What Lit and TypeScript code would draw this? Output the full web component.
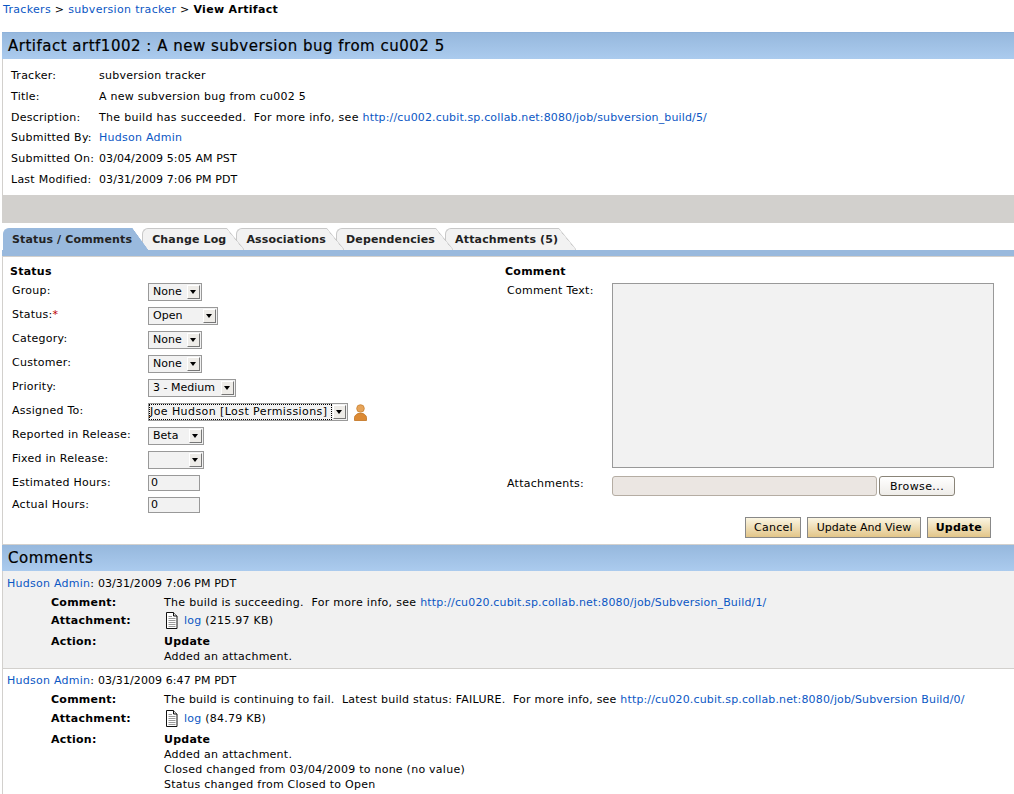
import { LitElement, css, html } from 'lit';
import { customElement } from 'lit/decorators.js';

const FIELDS = [
  { label: 'Tracker:', value: html`subversion tracker` },
  { label: 'Title:', value: html`A new subversion bug from cu002 5` },
  {
    label: 'Description:',
    value: html`<span class="wide">The build has succeeded.&nbsp; For more info, see </span><a class="url">http://cu002.cubit.sp.collab.net:8080/job/subversion_build/5/</a>`,
  },
  { label: 'Submitted By:', value: html`<a>Hudson Admin</a>` },
  { label: 'Submitted On:', value: html`<span class="date">03/04/2009 5:05 AM PST</span>` },
  { label: 'Last Modified:', value: html`<span class="date">03/31/2009 7:06 PM PDT</span>` },
];

const TABS = ['Status / Comments', 'Change Log', 'Associations', 'Dependencies', 'Attachments (5)'];

const SELECTS = [
  { label: 'Group:', value: 'None', width: 54 },
  { label: 'Status:', value: 'Open', width: 70, required: true },
  { label: 'Category:', value: 'None', width: 54 },
  { label: 'Customer:', value: 'None', width: 54 },
  { label: 'Priority:', value: '3 - Medium', width: 88 },
  { label: 'Assigned To:', value: 'Joe Hudson [Lost Permissions]', width: 200, focused: true },
  { label: 'Reported in Release:', value: 'Beta', width: 56 },
  { label: 'Fixed in Release:', value: '', width: 56 },
];

const personIcon = html`<svg class="person" width="13" height="17" viewBox="0 0 13 17">
  <circle cx="6.500" cy="4.500" r="3.800" fill="#e6a45a" stroke="#c9802f" stroke-width=".8" />
  <path d="M.5 16.500v-3c0-1.600 1.600-3 3.500-4h5c1.900 1 3.500 2.400 3.500 4v3z" fill="#dc8a34" stroke="#c0721f" stroke-width=".8" />
</svg>`;

const docIcon = html`<svg class="doc" width="13" height="17" viewBox="0 0 13 17" fill="none" stroke="#111">
  <path d="M1.500.5h7l3.500 3.500v12.500h-10.500z" fill="#fff" />
  <path d="M8.500.5v3.500h3.500" fill="#ddd" />
  <path d="M3.500 4.500h3.500M3.500 6.500h7M3.500 8.500h7M3.500 10.500h7M3.500 12.500h7M3.500 14.500h7" stroke="#999" />
</svg>`;

@customElement('app-root')
export class AppRoot extends LitElement {
  static styles = css`
    :host {
      display: block;
      height: 794px;
      overflow: hidden;
      background: #fff;
      color: #000;
      font: 11px/14px 'DejaVu Sans', sans-serif;
      letter-spacing: 0.25px;
    }
    a {
      color: #0b57c4;
    }
    a.url {
      letter-spacing: 0.15px;
    }
    .date {
      letter-spacing: 0.08px;
    }
    .wide {
      letter-spacing: 0.3px;
    }
    .narrow {
      letter-spacing: 0.23px;
    }
    .crumbs {
      padding: 3px 3px 0;
      height: 32px;
      box-sizing: border-box;
      letter-spacing: 0.32px;
    }
    .crumbs b {
      font-weight: bold;
    }
    .bar {
      margin-left: 2px;
      background: linear-gradient(#96b8dd, #abcbee);
      font-size: 15px;
      letter-spacing: 0.5px;
      -webkit-text-stroke: 0.2px #000;
      line-height: 27px;
      height: 27px;
      padding-left: 6px;
      box-sizing: border-box;
      border-top: 1px solid #8fb2da;
    }
    .artifact {
      border-left: 1px solid #d2d0cd;
      margin-left: 2px;
      padding: 6.6px 0 6px 8px;
      height: 136px;
      box-sizing: border-box;
    }
    .artifact .row {
      display: grid;
      grid-template-columns: 88px 1fr;
      height: 20.8px;
      align-items: center;
    }
    .gray {
      margin-left: 2px;
      height: 28px;
      background: #d2d0cd;
    }
    .tabs {
      margin: 5px 0 0 3px;
      display: flex;
      height: 22px;
    }
    .tab {
      position: relative;
      font-weight: bold;
      letter-spacing: 0.15px;
      height: 22px;
      line-height: 21px;
      padding: 0 0 0 8px;
      background: #f2f2f2;
      border-top: 1px solid #c8c8c8;
      border-left: 1px solid #c8c8c8;
      border-radius: 6px 0 0 0;
      box-sizing: border-box;
      color: #222;
    }
    .tab::after {
      content: '';
      position: absolute;
      z-index: 1;
      top: -1px;
      right: -18px;
      width: 18px;
      height: 22px;
      background: linear-gradient(to top right, #f2f2f2 49%, #c8c8c8 50%, transparent 54%);
    }
    .tab.active {
      background: #99b9dd;
      border-color: #99b9dd;
      z-index: 2;
    }
    .tab.active::after {
      right: -16px;
      width: 16px;
      background: linear-gradient(to top right, #99b9dd 50%, transparent 52%);
    }
    .tab + .tab {
      margin-left: 10px;
      padding-left: 9px;
    }
    .strip {
      height: 6px;
      background: #99b9dd;
      margin-left: 2px;
    }
    .form {
      display: grid;
      grid-template-columns: 495px 1fr;
      margin-left: 2px;
      height: 288px;
      border-left: 1px solid #d2d0cd;
      border-top: 1px solid #d2d0cd;
      box-sizing: border-box;
    }
    .left {
      padding: 8px 0 0 7px;
    }
    h4 {
      margin: 0;
      font-size: 11px;
      line-height: 14px;
      font-weight: bold;
    }
    .field {
      display: grid;
      grid-template-columns: 136px 1fr;
      align-items: center;
      height: 24px;
      padding-left: 2px;
    }
    .field > span:first-child {
      padding-bottom: 2px;
    }
    .field.first {
      margin-top: 1px;
    }
    .field.input {
      height: 22px;
    }
    .field.input > span:first-child {
      padding-bottom: 0;
    }
    .req {
      color: #b00;
    }
    .select {
      display: inline-flex;
      align-items: center;
      justify-content: space-between;
      box-sizing: border-box;
      height: 18px;
      padding: 0 1px 0 4px;
      border: 1px solid #999;
      background: #f2f2f2;
      letter-spacing: 0;
      vertical-align: middle;
    }
    .select.focused {
      padding-left: 1px;
      letter-spacing: 0.42px;
    }
    .select.focused span:first-child {
      flex: 1;
      height: 14px;
      line-height: 14px;
      outline: 1px dotted #000;
      margin-right: 2px;
    }
    .arrow {
      position: relative;
      width: 13px;
      height: 14px;
      background: #eeece8;
      border-right: 1px solid #777;
      border-bottom: 1px solid #777;
      border-top: 1px solid #fff;
      border-left: 1px solid #fff;
      box-sizing: border-box;
      flex: none;
    }
    .arrow::after {
      content: '';
      position: absolute;
      left: 2px;
      top: 4px;
      border: 3.5px solid transparent;
      border-top: 4px solid #000;
      border-bottom: 0;
    }
    .person {
      margin-left: 6px;
      vertical-align: middle;
    }
    .text {
      display: block;
      width: 52px;
      height: 16px;
      box-sizing: border-box;
      border: 1px solid #999;
      background: #f2f2f2;
      padding-left: 2px;
      line-height: 14px;
    }
    .right {
      padding: 8px 0 0 7px;
    }
    .comment-row {
      display: grid;
      grid-template-columns: 105px 382px;
      padding-left: 2px;
      margin-top: 4px;
    }
    .comment-row.c-text {
      height: 185px;
    }
    .comment-row.c-text > span {
      padding-top: 1px;
    }
    .area {
      height: 185px;
      border: 1px solid #999;
      background: #f2f2f2;
      box-sizing: border-box;
    }
    .attach {
      margin-top: 8px;
      align-items: start;
    }
    .attach > span {
      padding-top: 1px;
    }
    .file {
      display: flex;
      gap: 2px;
    }
    .file i {
      display: block;
      width: 265px;
      height: 20px;
      box-sizing: border-box;
      border: 1px solid #b5ada3;
      border-radius: 3px;
      background: #ebe6e2;
    }
    .file span {
      width: 76px;
      height: 20px;
      box-sizing: border-box;
      border: 1px solid #8a8478;
      border-radius: 3px;
      background: linear-gradient(#fff, #eeece8);
      text-align: center;
      line-height: 19px;
      letter-spacing: 0.4px;
    }
    .actions {
      display: flex;
      justify-content: flex-end;
      gap: 6px;
      margin: 21px 23px 0 0;
    }
    .btn {
      height: 21px;
      box-sizing: border-box;
      border: 1px solid #888;
      background: linear-gradient(#fbf6e3, #e2c588);
      line-height: 19px;
      padding: 0 8px;
    }
    .btn.cancel {
      padding: 0 7.5px;
    }
    .btn.long {
      letter-spacing: 0;
      padding: 0 8.5px;
    }
    .comments-bar {
      border-top: 1px solid #d2d0cd;
      height: 27px;
      line-height: 26px;
    }
    .entry {
      margin-left: 2px;
      padding: 6px 0 0 4px;
      border-left: 1px solid #d2d0cd;
      box-sizing: border-box;
    }
    .entry.shade {
      background: #f1f1f1;
      height: 98px;
      border-bottom: 1px solid #d2d0cd;
    }
    .entry.plain {
      height: 125px;
      padding-top: 5px;
    }
    .detail {
      display: grid;
      grid-template-columns: 113px 1fr;
      margin: 5px 0 0 44px;
      row-gap: 4px;
    }
    .detail dt {
      font-weight: bold;
    }
    .detail dd {
      margin: 0;
    }
    .detail .gap {
      padding-bottom: 3px;
    }
    .plain .detail .gap {
      padding-top: 1px;
    }
    .detail .action {
      line-height: 15px;
      margin-top: -1px;
    }
    .doc {
      vertical-align: middle;
      margin: -3px 6px -2px 1px;
    }
  `;

  private select(s: { value: string; width: number; focused?: boolean }) {
    return html`<span class="select ${s.focused ? 'focused' : ''}" style="width:${s.width}px">
      <span>${s.value}</span><span class="arrow"></span>
    </span>`;
  }

  render() {
    return html`
      <div class="crumbs"><a>Trackers</a> &gt; <a>subversion tracker</a> &gt; <b>View Artifact</b></div>
      <div class="bar">Artifact artf1002 : A new subversion bug from cu002 5</div>
      <div class="artifact">
        ${FIELDS.map((f) => html`<div class="row"><span>${f.label}</span><span>${f.value}</span></div>`)}
      </div>
      <div class="gray"></div>
      <div class="tabs">
        ${TABS.map((t, i) => html`<div class="tab ${i === 0 ? 'active' : ''}">${t}</div>`)}
      </div>
      <div class="strip"></div>
      <div class="form">
        <div class="left">
          <h4>Status</h4>
          ${SELECTS.map(
            (s, i) => html`<div class="field ${i === 0 ? 'first' : ''}">
              <span>${s.label}${s.required ? html`<span class="req">*</span>` : ''}</span>
              <span>${this.select(s)}${s.focused ? personIcon : ''}</span>
            </div>`
          )}
          <div class="field input"><span>Estimated Hours:</span><span class="text">0</span></div>
          <div class="field input"><span>Actual Hours:</span><span class="text">0</span></div>
        </div>
        <div class="right">
          <h4>Comment</h4>
          <div class="comment-row c-text"><span>Comment Text:</span><div class="area"></div></div>
          <div class="comment-row attach">
            <span>Attachments:</span>
            <div class="file"><i></i><span>Browse...</span></div>
          </div>
          <div class="actions">
            <span class="btn cancel">Cancel</span>
            <span class="btn long">Update And View</span>
            <span class="btn"><b>Update</b></span>
          </div>
        </div>
      </div>
      <div class="bar comments-bar">Comments</div>
      <div class="entry shade">
        <a>Hudson Admin</a>: <span class="date">03/31/2009 7:06 PM PDT</span>
        <dl class="detail">
          <dt>Comment:</dt>
          <dd><span class="wide">The build is succeeding.&nbsp; For more info, see </span><a class="url">http://cu020.cubit.sp.collab.net:8080/job/Subversion_Build/1/</a></dd>
          <dt class="gap">Attachment:</dt>
          <dd class="gap">${docIcon}<a>log</a> (215.97 KB)</dd>
          <dt>Action:</dt>
          <dd class="action"><b>Update</b><br />Added an attachment.</dd>
        </dl>
      </div>
      <div class="entry plain">
        <a>Hudson Admin</a>: <span class="date">03/31/2009 6:47 PM PDT</span>
        <dl class="detail">
          <dt>Comment:</dt>
          <dd><span class="narrow">The build is continuing to fail.&nbsp; Latest build status: FAILURE.&nbsp; For more info, see </span><a class="url">http://cu020.cubit.sp.collab.net:8080/job/Subversion Build/0/</a></dd>
          <dt class="gap">Attachment:</dt>
          <dd class="gap">${docIcon}<a>log</a> (84.79 KB)</dd>
          <dt>Action:</dt>
          <dd class="action"><b>Update</b><br />Added an attachment.<br />Closed changed from 03/04/2009 to none (no value)<br />Status changed from Closed to Open</dd>
        </dl>
      </div>
    `;
  }
}
